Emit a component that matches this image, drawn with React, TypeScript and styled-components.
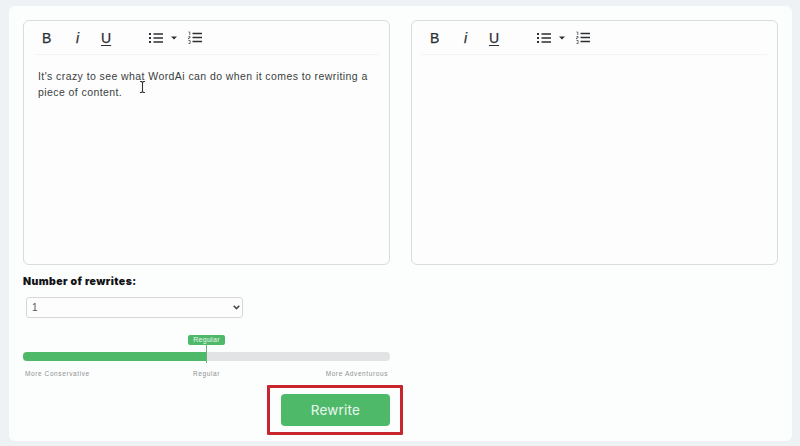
import React from "react";
import styled, { createGlobalStyle } from "styled-components";

const Global = createGlobalStyle`
  html, body { margin: 0; padding: 0; background: #eff2f4; }
  body { font-family: "Liberation Sans", Arial, sans-serif; }
`;

const Page = styled.div`
  width: 800px;
  height: 446px;
  box-sizing: border-box;
  padding: 6px 8px 5px 9px;
  overflow: hidden;
`;
const Card = styled.main`
  height: 100%;
  box-sizing: border-box;
  background: #fcfdfd;
  border-radius: 6px;
  padding: 14px 14px 0;
  display: grid;
  grid-template-columns: 367px 367px;
  column-gap: 21px;
  align-content: start;
`;
const Editor = styled.section`
  position: relative;
  height: 245px;
  box-sizing: border-box;
  border: 1px solid #d9dbdc;
  border-radius: 6px;
  background: #fdfdfd;
  display: flex;
  flex-direction: column;
`;
const Toolbar = styled.div`
  height: 33px;
  margin: 0 10px;
  padding-left: 8px;
  border-bottom: 1px solid #f2f3f3;
  display: flex;
  align-items: center;
  color: #2c2f33;
`;
const ToolGlyph = styled.span<{ $w: number; $italic?: boolean; $under?: boolean }>`
  width: ${(p) => p.$w}px;
  font-family: "Liberation Sans", Arial, sans-serif;
  font-size: 14px;
  line-height: 16px;
  font-style: ${(p) => (p.$italic ? "italic" : "normal")};
  text-decoration: ${(p) => (p.$under ? "underline" : "none")};
  text-underline-offset: 2px;
  -webkit-text-stroke: 0.25px currentColor;
`;
const IconWrap = styled.span<{ $w: number }>`
  width: ${(p) => p.$w}px;
  display: flex;
  align-items: center;
`;
const Body = styled.p`
  margin: 0;
  padding: 14px 14px 0;
  font-size: 10.5px;
  line-height: 15.5px;
  letter-spacing: 0.42px;
  color: #3a3d40;
`;
const Cursor = styled.svg`
  position: absolute;
  left: 115px;
  top: 60px;
`;
const Controls = styled.div`
  grid-column: 1;
  display: flex;
  flex-direction: column;
`;
const Label = styled.label`
  margin-top: 10px;
  font-family: Inter, sans-serif;
  font-size: 10.5px;
  line-height: 14px;
  font-weight: 900;
  letter-spacing: 0.42px;
  color: #111315;
`;
const SelectWrap = styled.div`
  position: relative;
  width: 217px;
  margin: 8px 0 0 3px;
`;
const Select = styled.select`
  display: block;
  width: 100%;
  height: 21px;
  padding: 0 5px;
  box-sizing: border-box;
  appearance: none;
  border: 1px solid #d5d7d9;
  border-radius: 3px;
  background: #fdfdfd;
  font-family: "Liberation Sans", Arial, sans-serif;
  font-size: 10px;
  color: #55585b;
`;
const Chevron = styled.svg`
  position: absolute;
  right: 3px;
  top: 8px;
  pointer-events: none;
`;
const Slider = styled.div`
  position: relative;
  margin-top: 34px;
  height: 9px;
  border-radius: 4px;
  background: #e1e3e4;
`;
const Fill = styled.div`
  height: 100%;
  border-radius: 4px 0 0 4px;
  background: #4fb96a;
`;
const Thumb = styled.span`
  position: absolute;
  left: 183px;
  top: -7px;
  width: 1px;
  height: 18px;
  background: #6fae83;
`;
const Bubble = styled.span`
  position: absolute;
  left: 165px;
  top: -17px;
  width: 37px;
  height: 10px;
  border-radius: 2px;
  background: #4fb96a;
  color: #e6f5ea;
  font-family: "Liberation Sans", Arial, sans-serif;
  font-size: 7px;
  line-height: 10px;
  letter-spacing: 0.3px;
  text-align: center;
`;
const Scale = styled.div`
  margin-top: 9px;
  padding: 0 2px;
  display: grid;
  grid-template-columns: 1fr auto 1fr;
  font-size: 6.5px;
  line-height: 8px;
  letter-spacing: 0.6px;
  color: #8f9294;
`;
const ScaleEnd = styled.span`
  text-align: right;
`;
const Actions = styled.div`
  display: flex;
  justify-content: flex-end;
  margin: 7px -13px 0 0;
`;
const Highlight = styled.div`
  box-sizing: border-box;
  width: 136px;
  height: 50px;
  border: 3px solid #c9252e;
  padding: 6px 10px 5px 11px;
  border-radius: 1px;
`;
const Rewrite = styled.button`
  display: block;
  width: 100%;
  height: 32px;
  border: 0;
  border-radius: 4px;
  background: #4fb96a;
  color: #e9f7ec;
  font-family: Inter, sans-serif;
  font-size: 13.5px;
  font-weight: 400;
  letter-spacing: 0.2px;
`;

const ListIcon = () => (
  <svg width="15" height="12" viewBox="0 0 15 12" fill="none" stroke="currentColor" strokeWidth="1.4">
    <path d="M4.5 2h9.5M4.5 6h9.5M4.5 10h9.5" />
    <path d="M0 2h2M0 6h2M0 10h2" strokeWidth="1.8" />
  </svg>
);
const Caret = () => (
  <svg width="6" height="4" viewBox="0 0 6 4" fill="currentColor">
    <path d="M0 0.5h6L3 3.5z" />
  </svg>
);
const NumberedIcon = () => (
  <svg width="15" height="13" viewBox="0 0 15 13" fill="none" stroke="currentColor" strokeWidth="1.4">
    <path d="M4.5 2.5h9.5M4.5 6.5h9.5M4.5 10.5h9.5" />
    <path d="M0.5 1h1.3v3M0.5 5.5h1.5v1.5h-1.5v1.2M0.5 9.5h1.6v3h-1.6" strokeWidth="0.7" />
  </svg>
);

const Tools = () => (
  <Toolbar>
    <ToolGlyph $w={34}>B</ToolGlyph>
    <ToolGlyph $w={25} $italic>i</ToolGlyph>
    <ToolGlyph $w={48} $under>U</ToolGlyph>
    <IconWrap $w={22}><ListIcon /></IconWrap>
    <IconWrap $w={17}><Caret /></IconWrap>
    <IconWrap $w={15}><NumberedIcon /></IconWrap>
  </Toolbar>
);

export default function App() {
  return (
    <Page>
      <Global />
      <Card>
        <Editor>
          <Tools />
          <Body>It's crazy to see what WordAi can do when it comes to rewriting a piece of content.</Body>
          <Cursor width="7" height="12" viewBox="0 0 7 12" fill="none" stroke="#33363a" strokeWidth="1.1">
            <path d="M1 .5h1.5l1 1 1-1H6M3.5 1.5v9M1 11.5h1.5l1-1 1 1H6" />
          </Cursor>
        </Editor>
        <Editor>
          <Tools />
        </Editor>
        <Controls>
          <Label htmlFor="rewrites">Number of rewrites:</Label>
          <SelectWrap>
            <Select id="rewrites" defaultValue="1">
              <option>1</option>
              <option>2</option>
              <option>3</option>
            </Select>
            <Chevron width="7" height="5" viewBox="0 0 7 5" fill="none" stroke="#44474a" strokeWidth="1.5">
              <path d="M.7 .8l2.8 2.8L6.3 .8" />
            </Chevron>
          </SelectWrap>
          <Slider>
            <Fill style={{ width: `${(184 / 367) * 100}%` }} />
            <Thumb />
            <Bubble>Regular</Bubble>
          </Slider>
          <Scale>
            <span>More Conservative</span>
            <span>Regular</span>
            <ScaleEnd>More Adventurous</ScaleEnd>
          </Scale>
          <Actions>
            <Highlight>
              <Rewrite>Rewrite</Rewrite>
            </Highlight>
          </Actions>
        </Controls>
      </Card>
    </Page>
  );
}
